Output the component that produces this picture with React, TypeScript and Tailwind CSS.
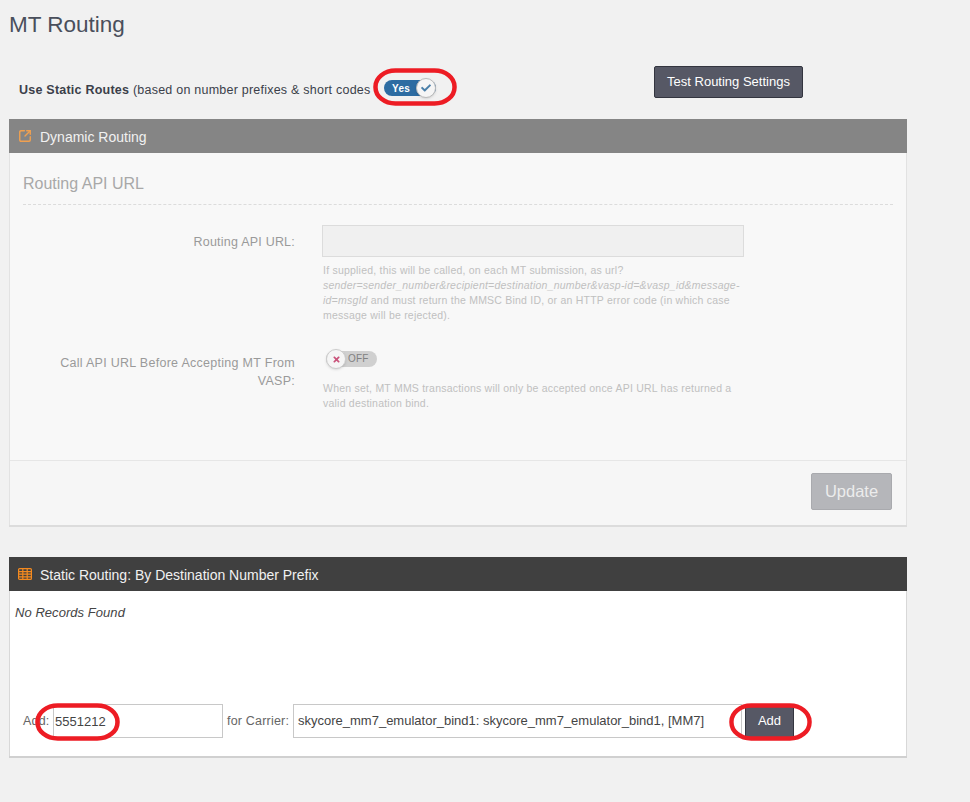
import { SquareArrowOutUpRight } from "lucide-react";
import { FaCheck, FaTimes } from "react-icons/fa";

function Ellipse({ className }: { className: string }) {
  return (
    <svg className={`absolute pointer-events-none ${className}`} viewBox="0 0 84 38" preserveAspectRatio="none" fill="none">
      <rect x="2.5" y="2.5" width="79" height="33" rx="20" ry="16" stroke="#ed1c24" strokeWidth="4.5" />
    </svg>
  );
}

function TableIcon() {
  return (
    <svg className="w-[14px] h-[12px] mb-[3px] shrink-0" viewBox="0 0 14 12" fill="none" stroke="#f58a1f" strokeWidth="1.2">
      <rect x="0.6" y="0.6" width="12.8" height="10.8" rx="1" />
      <path d="M0.6 3.6H13.4M0.6 6.2H13.4M0.6 8.8H13.4M4.8 0.6V11.4M9.2 0.6V11.4" />
    </svg>
  );
}

export default function App() {
  return (
    <div className="relative w-[970px] h-[802px] overflow-hidden bg-[#f1f1f1] font-['Liberation_Sans',Arial,sans-serif] text-[#333]">
      <h1 className="pl-[9px] pt-[10px] h-[66px] text-[22.5px] leading-[30px] text-[#4a4f5c] font-normal">MT Routing</h1>

      <div className="flex items-start h-[53px] pl-[19px] relative">
        <div className="text-[12.5px] tracking-[0.23px] text-[#3b3f4a] whitespace-nowrap w-[365px] pt-[15px]">
          <b className="font-bold">Use Static Routes</b> (based on number prefixes &amp; short codes
        </div>
        <div className="mt-[14px] relative w-[52px] h-[16px] rounded-full bg-[#2d6ca2] flex items-center text-white text-[10px] font-bold pl-[8px] tracking-[0.3px]">
          Yes
          <span className="absolute right-0 top-[-2px] w-[20px] h-[20px] rounded-full bg-[#f5f5f5] border border-[#bbb] shadow flex items-center justify-center">
            <FaCheck className="w-[10px] h-[10px] text-[#4a7fa8]" />
          </span>
        </div>
        <button className="ml-[218px] w-[149px] h-[32px] bg-[#565865] border border-[#33353f] rounded-[2px] text-white text-[13px]">
          Test Routing Settings
        </button>
      </div>

      <section className="ml-[9px] w-[898px] h-[408px] flex flex-col bg-[#f8f8f8] border-b-2 border-[#dcdcdc]">
        <header className="h-[34px] pt-[2px] bg-[#858585] flex items-center pl-[9px] gap-[8px] text-[#f1f1f1] text-[14px] shrink-0">
          <SquareArrowOutUpRight className="w-[14px] h-[14px] text-[#f0a050] mb-[3px]" strokeWidth={2.4} />
          Dynamic Routing
        </header>
        <div className="flex-1 flex flex-col border-x border-[#e2e2e2]">
          <div className="mx-[13px] mt-[21px] h-[31px] text-[16px] leading-[20px] text-[#a8a8a8] border-b border-dashed border-[#dcdcdc]">Routing API URL</div>
          <div className="flex mt-[20px]">
            <div className="w-[285px] text-right text-[12.5px] text-[#9a9a9a] pt-[8px] shrink-0 tracking-[0.22px]">Routing API URL:</div>
            <div className="ml-[27px] w-[422px]">
              <div className="h-[32px] bg-[#f0f0f0] border border-[#dcdcdc]" />
              <p className="mt-[6px] pl-[1px] text-[10.5px] leading-[15px] text-[#c0c0c0] tracking-[0.22px] whitespace-nowrap">
                If supplied, this will be called, on each MT submission, as url?<br />
                <i>sender=sender_number&amp;recipient=destination_number&amp;vasp-id=&amp;vasp_id&amp;message-<br />id=msgId</i> and must return the MMSC Bind ID, or an HTTP error code (in which case<br />
                message will be rejected).
              </p>
            </div>
          </div>
          <div className="flex mt-[26px]">
            <div className="w-[285px] text-right text-[12.5px] leading-[18px] text-[#9a9a9a] pt-[5px] shrink-0 tracking-[0.28px]">
              Call API URL Before Accepting MT From<br />VASP:
            </div>
            <div className="ml-[27px] w-[422px]">
              <div className="ml-[4px] relative w-[51px] h-[16px] mt-[2px] rounded-full bg-[#d0d0d0] text-[#808080] text-[10px] leading-[16px] pl-[22px] tracking-[0.2px]">
                OFF
                <span className="absolute left-0 top-[-2px] w-[20px] h-[20px] rounded-full bg-[#f5f5f5] border border-[#ccc] shadow-sm flex items-center justify-center">
                  <FaTimes className="w-[9px] h-[9px] text-[#c9527a]" />
                </span>
              </div>
              <p className="mt-[14px] pl-[1px] text-[10.5px] leading-[15px] text-[#c0c0c0] tracking-[0.22px] whitespace-nowrap">
                When set, MT MMS transactions will only be accepted once API URL has returned a<br />valid destination bind.
              </p>
            </div>
          </div>
          <div className="mt-auto h-[65px] pb-[3px] border-t border-[#e6e6e6] flex items-center justify-end pr-[14px] bg-[#f6f6f6]">
            <button className="w-[81px] h-[37px] bg-[#b5b6ba] border border-[#a9aaae] rounded-[2px] text-[#ececec] text-[16.5px]">Update</button>
          </div>
        </div>
      </section>

      <section className="ml-[9px] mt-[30px] w-[898px] h-[201px] flex flex-col bg-white border-b-2 border-[#d0d0d0]">
        <header className="h-[34px] pt-[2px] bg-[#404040] flex items-center pl-[9px] gap-[8px] text-[#f1f1f1] text-[14px] shrink-0">
          <TableIcon />
          Static Routing: By Destination Number Prefix
        </header>
        <div className="flex-1 flex flex-col border-x border-[#d8d8d8]">
          <i className="pl-[5px] pt-[13px] text-[13px] tracking-[0.05px] text-[#444] leading-[17px]">No Records Found</i>
          <div className="flex items-center mt-[83px] text-[12.5px] text-[#666]">
            <span className="ml-[13px] w-[30px] tracking-[0.2px]">Add:</span>
            <input readOnly value="5551212" className="w-[170px] h-[34px] border border-[#c8c8c8] bg-white pl-[1px] text-[13px] text-[#444] outline-none" />
            <span className="ml-[4px] w-[66px] tracking-[0.2px]">for Carrier:</span>
            <div className="w-[449px] h-[34px] border border-[#c8c8c8] bg-white pl-[4px] flex items-center text-[13px] text-[#444] whitespace-nowrap">
              skycore_mm7_emulator_bind1: skycore_mm7_emulator_bind1, [MM7]
            </div>
            <button className="ml-[3px] w-[49px] h-[33px] bg-[#565865] border border-[#33353f] text-white text-[13px]">Add</button>
          </div>
        </div>
      </section>

      <Ellipse className="left-[373px] top-[68px] w-[84px] h-[38px]" />
      <Ellipse className="left-[35px] top-[703px] w-[85px] h-[38px]" />
      <Ellipse className="left-[729px] top-[703px] w-[83px] h-[38px]" />
    </div>
  );
}
